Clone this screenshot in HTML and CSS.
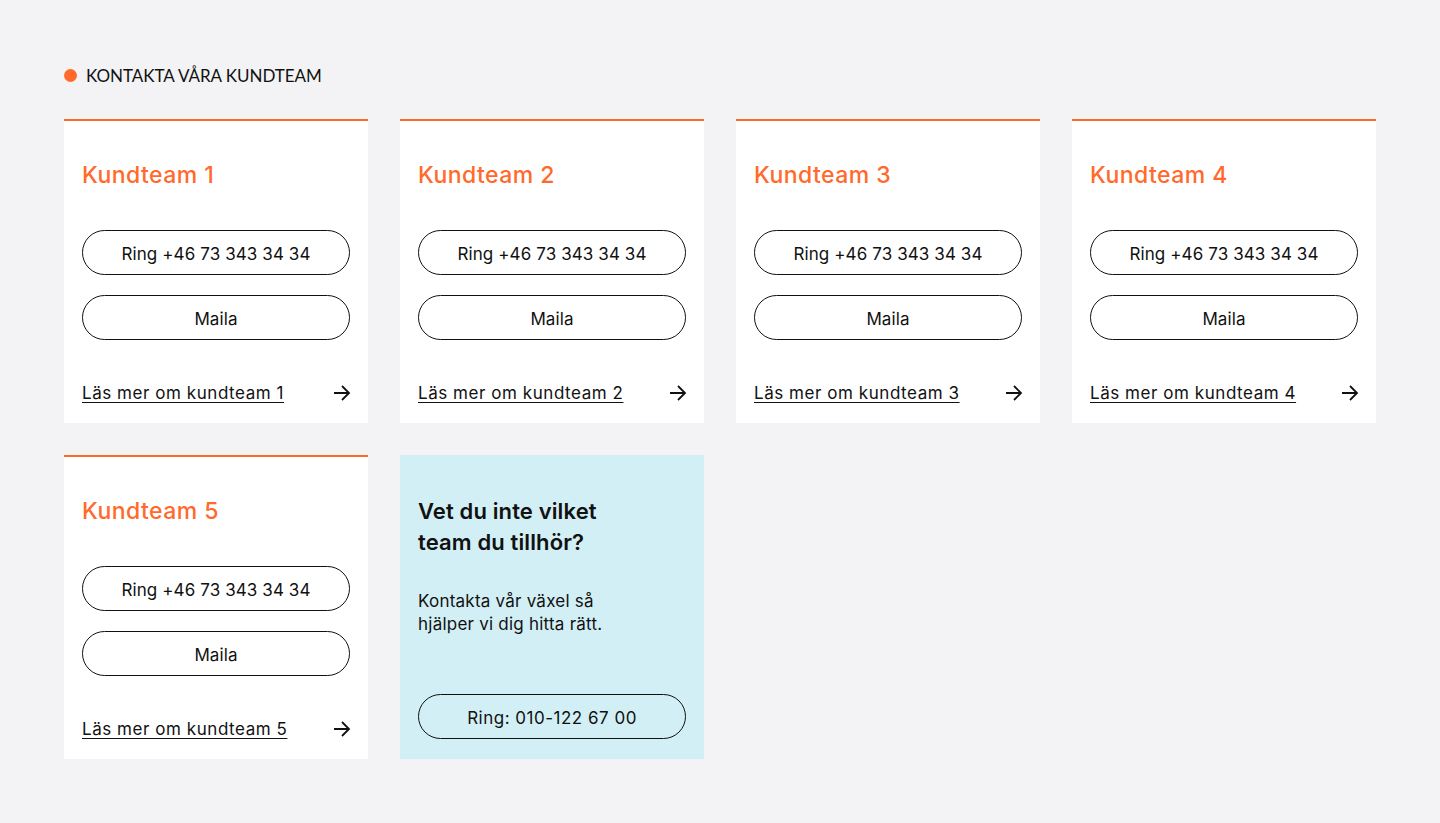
FILE: index.html
```html
<!DOCTYPE html>
<html lang="sv">
<head>
<meta charset="utf-8">
<title>Kontakta våra kundteam</title>
<link rel="stylesheet" href="styles.css">
</head>
<body>
<section class="section">
  <h2 class="eyebrow"><span class="dot"></span>KONTAKTA VÅRA KUNDTEAM</h2>
  <div class="grid">
    <article class="card">
      <h3 class="card-title">Kundteam 1</h3>
      <div class="actions">
        <a class="btn" href="#">Ring +46 73 343 34 34</a>
        <a class="btn" href="#">Maila</a>
      </div>
      <a class="more" href="#"><span class="more-text">Läs mer om kundteam 1</span><svg class="arrow" viewBox="0 0 20 20" width="20" height="20"><path d="M2 10h15M10 3l7 7-7 7" fill="none" stroke="#111" stroke-width="1.8"/></svg></a>
    </article>
    <article class="card">
      <h3 class="card-title">Kundteam 2</h3>
      <div class="actions">
        <a class="btn" href="#">Ring +46 73 343 34 34</a>
        <a class="btn" href="#">Maila</a>
      </div>
      <a class="more" href="#"><span class="more-text">Läs mer om kundteam 2</span><svg class="arrow" viewBox="0 0 20 20" width="20" height="20"><path d="M2 10h15M10 3l7 7-7 7" fill="none" stroke="#111" stroke-width="1.8"/></svg></a>
    </article>
    <article class="card">
      <h3 class="card-title">Kundteam 3</h3>
      <div class="actions">
        <a class="btn" href="#">Ring +46 73 343 34 34</a>
        <a class="btn" href="#">Maila</a>
      </div>
      <a class="more" href="#"><span class="more-text">Läs mer om kundteam 3</span><svg class="arrow" viewBox="0 0 20 20" width="20" height="20"><path d="M2 10h15M10 3l7 7-7 7" fill="none" stroke="#111" stroke-width="1.8"/></svg></a>
    </article>
    <article class="card">
      <h3 class="card-title">Kundteam 4</h3>
      <div class="actions">
        <a class="btn" href="#">Ring +46 73 343 34 34</a>
        <a class="btn" href="#">Maila</a>
      </div>
      <a class="more" href="#"><span class="more-text">Läs mer om kundteam 4</span><svg class="arrow" viewBox="0 0 20 20" width="20" height="20"><path d="M2 10h15M10 3l7 7-7 7" fill="none" stroke="#111" stroke-width="1.8"/></svg></a>
    </article>
    <article class="card">
      <h3 class="card-title">Kundteam 5</h3>
      <div class="actions">
        <a class="btn" href="#">Ring +46 73 343 34 34</a>
        <a class="btn" href="#">Maila</a>
      </div>
      <a class="more" href="#"><span class="more-text">Läs mer om kundteam 5</span><svg class="arrow" viewBox="0 0 20 20" width="20" height="20"><path d="M2 10h15M10 3l7 7-7 7" fill="none" stroke="#111" stroke-width="1.8"/></svg></a>
    </article>
    <article class="card card-info">
      <h3 class="info-title">Vet du inte vilket<br>team du tillhör?</h3>
      <p class="info-text">Kontakta vår växel så<br>hjälper vi dig hitta rätt.</p>
      <a class="btn btn-switch" href="#">Ring: 010-122 67 00</a>
    </article>
  </div>
</section>
</body>
</html>
```

FILE: styles.css
```css
* { box-sizing: border-box; }
html, body { margin: 0; padding: 0; }
body {
  background: #f3f3f5;
  font-family: "Inter", "Liberation Sans", sans-serif;
  color: #111;
  width: 1440px;
  height: 823px;
  overflow: hidden;
}
.section {
  padding: 64px 64px 0 64px;
}
.eyebrow {
  display: flex;
  align-items: center;
  gap: 9px;
  margin: 0;
  height: 22px;
  font-family: "Lato", "Liberation Sans", sans-serif;
  font-size: 17px;
  font-weight: 400;
  letter-spacing: -0.04px;
  color: #111;
}
.dot {
  width: 13px;
  height: 13px;
  border-radius: 50%;
  background: #ff6a2c;
  flex: none;
}
.grid {
  margin-top: 33px;
  display: grid;
  grid-template-columns: repeat(4, 304px);
  column-gap: 32px;
  row-gap: 32px;
}
.card {
  background: #fff;
  border-top: 2px solid #ff6a2c;
  height: 304px;
  padding: 39px 18px 0 18px;
  display: flex;
  flex-direction: column;
}
.card-title {
  margin: 0;
  font-size: 23px;
  line-height: 30px;
  font-weight: 500;
  color: #ff6a2c;
  letter-spacing: 0.45px;
}
.actions {
  margin-top: 40px;
  display: flex;
  flex-direction: column;
  gap: 20px;
}
.btn {
  display: flex;
  align-items: center;
  justify-content: center;
  height: 45px;
  width: 268px;
  padding-top: 2px;
  border: 1px solid #111;
  border-radius: 23px;
  font-size: 17px;
  color: #111;
  text-decoration: none;
  letter-spacing: 0.1px;
}
.more {
  margin-top: 42px;
  display: flex;
  align-items: center;
  justify-content: space-between;
  color: #111;
  text-decoration: none;
  font-size: 17px;
  line-height: 22px;
}
.more-text {
  text-decoration: underline;
  text-underline-offset: 3px;
  text-decoration-thickness: 1px;
  letter-spacing: 0.55px;
}
.arrow { flex: none; margin-right: -2px; }
.card-info {
  background: #d2eff5;
  border-top: 0;
  padding-top: 41px;
}
.info-title {
  margin: 0;
  font-size: 22px;
  line-height: 31px;
  font-weight: 600;
  color: #111;
  letter-spacing: 0.13px;
}
.info-text {
  margin: 32px 0 0 0;
  font-size: 17px;
  line-height: 23px;
  color: #111;
  letter-spacing: 0.23px;
}
.btn-switch {
  margin-top: 58px;
  letter-spacing: 0.5px;
}
```
